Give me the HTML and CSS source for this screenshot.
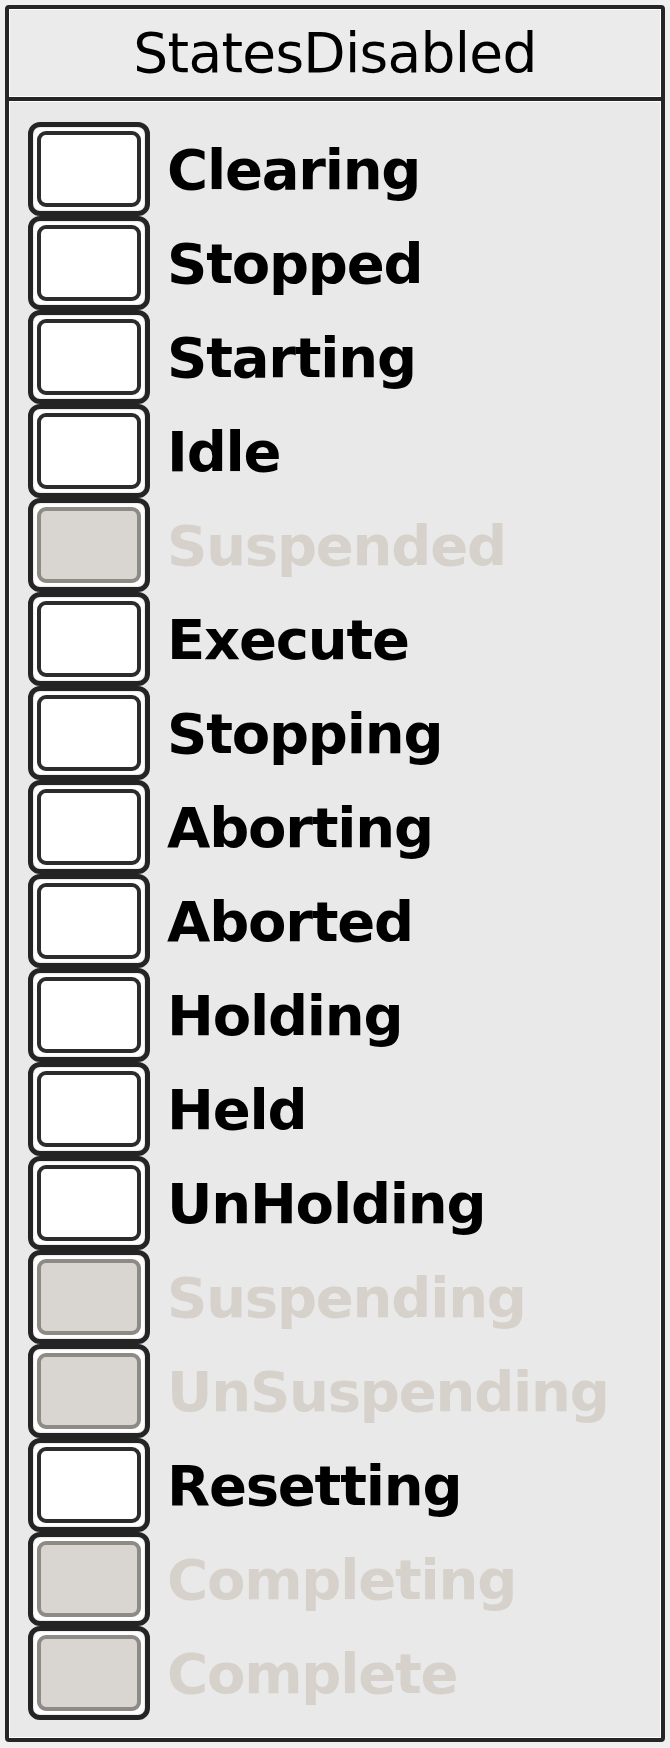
FILE: index.html
```html
<!DOCTYPE html>
<html lang="en">
<head>
  <meta charset="UTF-8" />
  <title>StatesDisabled</title>
  <link rel="stylesheet" href="styles.css">
</head>
<body>
  <div class="panel">
    <div class="panel-head">StatesDisabled</div>
    <div class="panel-body">
      <label class="state"><span class="box"><span class="fill"></span></span>Clearing</label>
      <label class="state"><span class="box"><span class="fill"></span></span>Stopped</label>
      <label class="state"><span class="box"><span class="fill"></span></span>Starting</label>
      <label class="state"><span class="box"><span class="fill"></span></span>Idle</label>
      <label class="state off"><span class="box"><span class="fill"></span></span>Suspended</label>
      <label class="state"><span class="box"><span class="fill"></span></span>Execute</label>
      <label class="state"><span class="box"><span class="fill"></span></span>Stopping</label>
      <label class="state"><span class="box"><span class="fill"></span></span>Aborting</label>
      <label class="state"><span class="box"><span class="fill"></span></span>Aborted</label>
      <label class="state"><span class="box"><span class="fill"></span></span>Holding</label>
      <label class="state"><span class="box"><span class="fill"></span></span>Held</label>
      <label class="state"><span class="box"><span class="fill"></span></span>UnHolding</label>
      <label class="state off"><span class="box"><span class="fill"></span></span>Suspending</label>
      <label class="state off"><span class="box"><span class="fill"></span></span>UnSuspending</label>
      <label class="state"><span class="box"><span class="fill"></span></span>Resetting</label>
      <label class="state off"><span class="box"><span class="fill"></span></span>Completing</label>
      <label class="state off"><span class="box"><span class="fill"></span></span>Complete</label>
    </div>
  </div>
</body>
</html>
```

FILE: styles.css
```css
* { margin: 0; padding: 0; box-sizing: border-box; }
body {
  background: #f0f0f0;
  padding: 5px;
  font-family: 'DejaVu Sans', 'Liberation Sans', sans-serif;
  color: #000;
}

/* outer group frame */
.panel {
  width: 660px; height: 1737px;
  border: 4px solid #262626;
  border-radius: 4px;
  background: #262626;
  display: flex; flex-direction: column;
  gap: 4px;
}
.panel-head {
  height: 88px;
  background: #ebebeb;
  box-shadow: inset 0 0 0 1px #fff;
  display: flex; align-items: center; justify-content: center;
  font-size: 55px;
  letter-spacing: -0.7px;
}
.panel-body {
  flex: 1;
  background: #e9e9e9;
  box-shadow: inset 0 0 0 1px #fff;
  padding: 21px 19px 18px;
}

/* checkbox rows */
.state {
  height: 94px;
  display: flex; align-items: center;
  gap: 17px;
  font-size: 56px;
  font-weight: bold;
  letter-spacing: -1.2px;
  color: #000;
}
.box {
  width: 122px; height: 94px;
  flex-shrink: 0;
  border: 5px solid #242424;
  border-radius: 12px;
  padding: 4px;
  background: #fff;
  box-shadow: inset 0 0 2px #bbb;
}
.fill {
  display: block;
  width: 100%; height: 100%;
  border: 4px solid #2c2c2c;
  border-radius: 9px;
  background: #fff;
}
.state.off { color: #d6d1ca; }
.state.off .fill { border-color: #8e8a86; background: #d9d5d0; }
```
